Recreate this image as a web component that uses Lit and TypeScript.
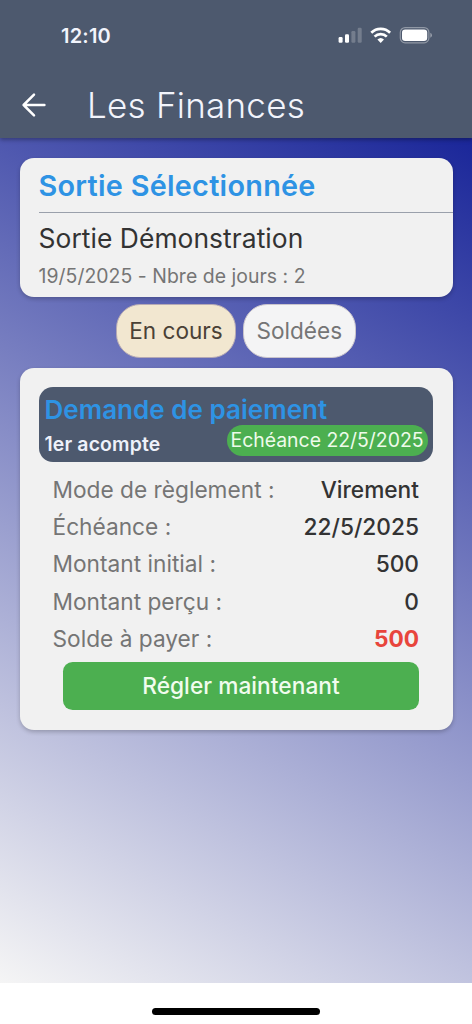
import { LitElement, html, css } from "lit";
import { customElement, state } from "lit/decorators.js";

interface Row {
  label: string;
  value: string;
  due?: boolean;
}

const ROWS: Row[] = [
  { label: "Mode de règlement :", value: "Virement" },
  { label: "Échéance :", value: "22/5/2025" },
  { label: "Montant initial :", value: "500" },
  { label: "Montant perçu :", value: "0" },
  { label: "Solde à payer :", value: "500", due: true },
];

@customElement("status-bar")
export class StatusBar extends LitElement {
  static styles = css`
    :host {
      display: flex;
      justify-content: space-between;
      align-items: center;
      height: 71px;
      padding: 0 39px 0 61px;
      box-sizing: border-box;
    }
    .time {
      font-size: 20px;
      font-weight: 600;
      line-height: 24px;
      letter-spacing: 0.2px;
    }
    .icons {
      display: block;
      width: 95px;
      height: 18px;
      margin-top: -1px;
    }
  `;

  render() {
    return html`
      <span class="time">12:10</span>
      <svg class="icons" viewBox="0 0 95 18" fill="#fff">
        <rect x="0.6" y="11" width="4" height="5.8" rx="1.2" />
        <rect x="7" y="8.3" width="4" height="8.5" rx="1.2" />
        <rect x="13.4" y="5" width="4" height="11.8" rx="1.2" opacity="0.22" />
        <rect x="19.7" y="1.7" width="4" height="15.1" rx="1.2" opacity="0.22" />
        <g fill="none" stroke="#fff" stroke-width="2.7">
          <path d="M33.3 6.8A13.4 13.4 0 0 1 52.1 6.8" />
          <path d="M36.6 10.6A8.6 8.6 0 0 1 48.8 10.6" />
        </g>
        <path d="M42.7 16.9L39.4 13.6A4.8 4.8 0 0 1 46 13.6Z" />
        <rect x="62.3" y="1.6" width="28.6" height="15.2" rx="4.8" fill="none" stroke="#fff" stroke-opacity="0.38" stroke-width="1.2" />
        <rect x="64" y="3.4" width="25.2" height="11.6" rx="3.2" />
        <path d="M92.3 6.8Q94 7.6 94 9.3Q94 11 92.3 11.8Z" opacity="0.42" />
      </svg>
    `;
  }
}

@customElement("app-root")
export class AppRoot extends LitElement {
  static styles = css`
    :host {
      display: flex;
      flex-direction: column;
      height: 1024px;
      overflow: hidden;
      background: #fff;
      font-family: "Inter", sans-serif;
      white-space: nowrap;
      color: #333;
    }
    header {
      flex: none;
      height: 138px;
      background: #4d596e;
      color: #f2f4fc;
      box-shadow: 0 2px 4px rgba(0, 0, 0, 0.3);
      z-index: 1;
    }
    .toolbar {
      display: flex;
      align-items: center;
      height: 68px;
      padding-left: 19px;
    }
    .back {
      width: 30px;
      height: 30px;
      margin-right: 38px;
    }
    .title {
      margin: 0;
      font-size: 35px;
      font-weight: 300;
      line-height: 44px;
      letter-spacing: 0.25px;
    }
    main {
      flex: 1;
      display: flex;
      flex-direction: column;
      padding: 19.5px 19.5px 0;
      background: linear-gradient(209.19deg, #1a2699, #f5f5f5);
    }
    .card {
      border-radius: 14px;
      background: #f1f1f1;
      box-shadow: 0 2px 4px rgba(0, 0, 0, 0.22);
    }
    .outing {
      height: 139.5px;
      padding-left: 19px;
      box-sizing: border-box;
    }
    .outing h2 {
      margin: 0;
      padding-top: 2px;
      padding-bottom: 1px;
      height: 51px;
      line-height: 51px;
      border-bottom: 1px solid #9aa0ab;
      font-size: 28.8px;
      font-weight: 600;
      letter-spacing: 0.28px;
      color: #2e93e4;
    }
    .name {
      padding-top: 8px;
      font-size: 26.4px;
      line-height: 34px;
      letter-spacing: 0.06px;
    }
    .meta {
      padding-top: 9px;
      font-size: 19.4px;
      line-height: 24px;
      letter-spacing: 0.05px;
      color: #757575;
    }
    .chips {
      display: flex;
      justify-content: center;
      gap: 7px;
      padding: 6.5px 0 10.5px;
    }
    .chip {
      width: 113px;
      height: 54px;
      padding: 0 0 1px;
      box-sizing: border-box;
      border: 1px solid #c9c4cc;
      border-radius: 24px;
      background: #f4f4f5;
      color: #757575;
      font: inherit;
      font-size: 22.6px;
    }
    .chip.on {
      width: 119.5px;
      background: #f2e7d0;
      border-color: #b5a9b4;
      color: #4a4136;
    }
    .payment {
      height: 361.5px;
      padding: 19px 19.5px;
      box-sizing: border-box;
    }
    .banner {
      display: grid;
      grid-template-columns: 1fr auto;
      grid-template-rows: 37.5px 31.5px;
      height: 74.5px;
      padding: 0 5.5px;
      box-sizing: border-box;
      border-radius: 14px;
      background: #4d596e;
    }
    .banner h3 {
      grid-column: 1 / -1;
      margin: 0;
      padding-top: 4px;
      font-size: 26px;
      font-weight: 600;
      line-height: 38px;
      letter-spacing: 0.03px;
      color: #2e93e4;
    }
    .part {
      font-size: 19.4px;
      font-weight: 600;
      line-height: 38px;
      letter-spacing: 0.15px;
      color: #eef1fa;
    }
    .badge {
      padding: 0 4px;
      border-radius: 16px;
      background: #4caf50;
      color: #eefbea;
      font-size: 19.4px;
      line-height: 31.5px;
    }
    dl {
      margin: 9.5px 14px 0 13.5px;
    }
    .row {
      display: flex;
      justify-content: space-between;
      height: 37.2px;
      font-size: 22.7px;
      line-height: 37.2px;
    }
    dt {
      color: #757575;
    }
    dd {
      margin: 0;
      font-weight: 500;
    }
    dd.due {
      font-weight: 700;
      color: #e8453c;
    }
    .pay {
      display: block;
      width: 356px;
      height: 48.5px;
      margin: 5px 0 0 24px;
      padding: 0 0 1px;
      border: 0;
      border-radius: 9.6px;
      background: #4caf50;
      color: #f1fcee;
      font: inherit;
      font-size: 22.7px;
      font-weight: 500;
      letter-spacing: 0.05px;
    }
    footer {
      flex: none;
      display: flex;
      justify-content: center;
      height: 41px;
      padding-top: 25px;
      box-sizing: border-box;
    }
    .home {
      width: 168px;
      height: 6.5px;
      border-radius: 4px;
      background: #000;
    }
  `;

  @state() private tab = "En cours";

  render() {
    return html`
      <header>
        <status-bar></status-bar>
        <div class="toolbar">
          <svg class="back" viewBox="0 0 30 30" fill="none" stroke="#fff" stroke-width="2.5" stroke-linecap="round" stroke-linejoin="round">
            <path d="M25.4 15H4.6M15 4.7L4.6 15L15 25.3" />
          </svg>
          <h1 class="title">Les Finances</h1>
        </div>
      </header>
      <main>
        <section class="card outing">
          <h2>Sortie Sélectionnée</h2>
          <div class="name">Sortie Démonstration</div>
          <div class="meta">19/5/2025 - Nbre de jours : 2</div>
        </section>
        <nav class="chips">
          ${["En cours", "Soldées"].map(
            (t) => html`<button class="chip ${this.tab === t ? "on" : ""}" @click=${() => (this.tab = t)}>${t}</button>`
          )}
        </nav>
        <section class="card payment">
          <div class="banner">
            <h3>Demande de paiement</h3>
            <span class="part">1er acompte</span>
            <span class="badge">Echéance 22/5/2025</span>
          </div>
          <dl>
            ${ROWS.map(
              (r) => html`<div class="row"><dt>${r.label}</dt><dd class=${r.due ? "due" : ""}>${r.value}</dd></div>`
            )}
          </dl>
          <button class="pay">Régler maintenant</button>
        </section>
      </main>
      <footer><div class="home"></div></footer>
    `;
  }
}
